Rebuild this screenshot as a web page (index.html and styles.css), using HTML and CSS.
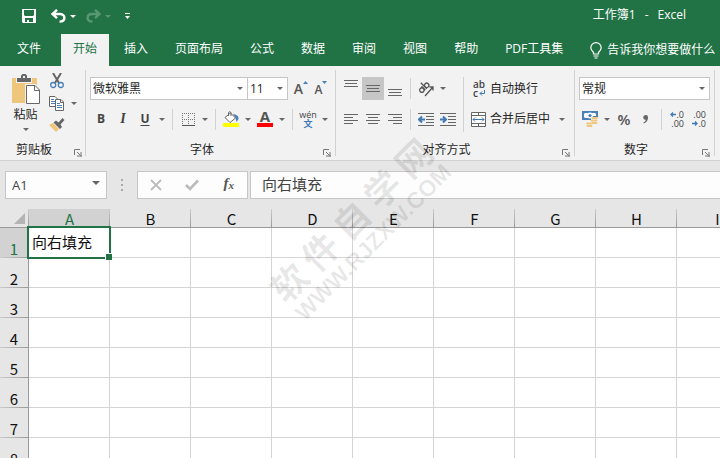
FILE: index.html
```html
<!DOCTYPE html>
<html lang="zh-CN">
<head>
<meta charset="utf-8">
<title>工作簿1 - Excel</title>
<link rel="stylesheet" href="styles.css">
</head>
<body>
<header class="titlebar">
  <div class="quick">
    <button class="q-save" aria-label="保存"><svg width="14" height="14" viewBox="0 0 14 14"><path fill="#fff" fill-rule="evenodd" d="M0 0H14V14H1L0 13ZM2 1V6L3 7H11L12 6V1ZM3 9V13H5V11H7V13H11V9Z"/></svg></button>
    <button class="q-undo" aria-label="撤消"><svg width="15" height="14" viewBox="0 0 15 14"><path fill="none" stroke="#fff" stroke-width="2.4" d="M6 .8L1.6 5 6 9.2M2 5H9C12.200 5 13.400 7 13.400 9 13.400 11.500 11.500 12.600 8.500 12.600"/></svg></button>
    <button class="q-drop" aria-label="撤消选项"><i class="tri white"></i></button>
    <button class="q-undo dim" aria-label="恢复"><svg width="15" height="14" viewBox="0 0 15 14"><path fill="none" stroke="#fff" stroke-width="2.400" d="M9 .8L13.400 5 9 9.200M13 5H6C2.800 5 1.600 7 1.600 9 1.600 11.500 3.500 12.600 6.500 12.600"/></svg></button>
    <button class="q-drop dim" aria-label="恢复选项"><i class="tri white"></i></button>
    <button class="q-more" aria-label="自定义快速访问工具栏"><svg width="5" height="6" viewBox="0 0 5 6"><path fill="#fff" d="M0 0H5V1H0ZM0 3H5L2.500 6Z"/></svg></button>
  </div>
  <div class="doc-name"><span>工作簿1</span><span>-</span><span>Excel</span></div>
</header>
<nav class="tabs">
  <a class="tab file" href="#">文件</a>
  <a class="tab active" href="#">开始</a>
  <a class="tab" href="#">插入</a>
  <a class="tab" href="#">页面布局</a>
  <a class="tab" href="#">公式</a>
  <a class="tab" href="#">数据</a>
  <a class="tab" href="#">审阅</a>
  <a class="tab" href="#">视图</a>
  <a class="tab" href="#">帮助</a>
  <a class="tab" href="#">PDF工具集</a>
  <a class="tell" href="#"><svg width="12" height="17" viewBox="0 0 12 17"><path fill="none" stroke="#fff" stroke-width="1.200" d="M3.500 12V10.500C2 9 .8 7.800 .8 5.800A5.200 5.200 0 0 1 11.200 5.800C11.200 7.800 10 9 8.500 10.500V12ZM3.500 14H8.500M4.500 16H7.500"/></svg>告诉我你想要做什么</a>
</nav>

<section class="ribbon">
  <div class="group clipboard">
    <div class="clip-body">
      <button class="paste"><svg width="29" height="31" viewBox="0 0 29 31"><path fill="#eec67c" d="M0 4H25V29H0Z"/><path fill="#f2f2f2" d="M4 3H20V9H4Z"/><path fill="#666" d="M5 4H9V1.500L10.500 0H13.500L15 1.500V4H19V8H5ZM11 2V4H13V2Z" fill-rule="evenodd"/><path fill="#fff" stroke="#f2f2f2" stroke-width="3" d="M14.500 11.500H23L27.500 16V29.500H14.500Z"/><path fill="#fff" stroke="#666" d="M14.500 11.500H23L27.500 16V29.500H14.500ZM22.500 11.500V16.500H27.500"/></svg><span>粘贴</span><i class="tri"></i></button>
      <div class="clip-tools">
        <button class="ic" aria-label="剪切"><svg width="14" height="16" viewBox="0 0 14 16"><path fill="none" stroke="#666" stroke-width="2" d="M3 0L9 10M11 0L5 10"/><circle cx="3.200" cy="12" r="2.500" fill="none" stroke="#4a80b5" stroke-width="1.300"/><circle cx="10.800" cy="12" r="2.500" fill="none" stroke="#4a80b5" stroke-width="1.300"/></svg></button>
        <div class="pair"><button class="ic" aria-label="复制"><svg width="16" height="15" viewBox="0 0 16 15"><path fill="#fff" stroke="#666" d="M.5 .5H6L8.500 3V10.500H.5Z"/><path stroke="#4a80b5" d="M2 3.500H5M2 5.500H6M2 7.500H6"/><path fill="#fff" stroke="#666" d="M6.500 3.500H12L14.500 6V14.500H6.500ZM11.500 3.500V6.500H14.500"/><path stroke="#4a80b5" d="M8 7.500H11M8 9.500H13M8 11.500H13"/></svg></button><button class="arrow" aria-label="复制选项"><i class="tri"></i></button></div>
        <button class="ic" aria-label="格式刷"><svg width="16" height="14" viewBox="0 0 16 14"><path fill="#eec67c" d="M0 7L4 5 10 11 7 14Z"/><path fill="#666" d="M4.500 4.500L7 2.500 9.500 4.500 13.500 0 15.500 2 11.500 6.500 13 9 11 11Z"/></svg></button>
      </div>
    </div>
    <div class="caption"><span>剪贴板</span><button class="launch" aria-label="剪贴板设置"><svg width="8" height="8" viewBox="0 0 8 8"><path fill="none" stroke="#777" d="M.5 6V.5H6M3 3L6.500 6.500M7 3V7.500M3 7H8"/></svg></button></div>
  </div>

  <div class="group font">
    <div class="row top">
      <label class="combo name"><select aria-label="字体"><option>微软雅黑</option></select></label><label class="combo size"><select aria-label="字号"><option>11</option></select></label>
      <button class="ic grow" aria-label="增大字号"><span>A</span><svg width="5" height="3" viewBox="0 0 5 3"><path fill="#4a80b5" d="M0 3L2.500 0 5 3Z"/></svg></button>
      <button class="ic grow small" aria-label="减小字号"><span>A</span><svg width="5" height="3" viewBox="0 0 5 3"><path fill="#4a80b5" d="M0 0H5L2.500 3Z"/></svg></button>
    </div>
    <div class="row">
      <button class="ic letter">B</button><button class="ic letter italic">I</button><button class="ic letter under">U</button><button class="arrow" aria-label="下划线选项"><i class="tri"></i></button>
      <i class="bar"></i>
      <button class="ic" aria-label="边框"><svg width="13" height="13" viewBox="0 0 13 13"><path stroke="#777" stroke-dasharray="1 1" fill="none" d="M0 .5H13M0 6.500H13M.5 0V12M6.500 0V12M12.500 0V12"/><path stroke="#555" d="M0 12.500H13"/></svg></button><button class="arrow" aria-label="边框选项"><i class="tri"></i></button>
      <i class="bar"></i>
      <button class="ic" aria-label="填充颜色"><svg width="16" height="16" viewBox="0 0 16 16"><path fill="#4a80b5" d="M10 3C14 3.500 16 5.500 15.500 8L13.500 11 12.500 7Z"/><path fill="#fff" stroke="#666" d="M2 6.500L7.500 2 12.500 7 7 11.500Z"/><path fill="none" stroke="#666" d="M5.500 5V1.500Q6.500 0 8 1.500V5"/><path fill="#ff0" d="M0 12H16V16H0Z"/></svg></button><button class="arrow" aria-label="填充颜色选项"><i class="tri"></i></button>
      <button class="ic fontcolor" aria-label="字体颜色"><span>A</span></button><button class="arrow" aria-label="字体颜色选项"><i class="tri"></i></button>
      <i class="bar"></i>
      <button class="ic pinyin"><span>wén</span><b>文</b></button><button class="arrow" aria-label="拼音选项"><i class="tri"></i></button>
    </div>
    <div class="caption"><span>字体</span><button class="launch" aria-label="字体设置"><svg width="8" height="8" viewBox="0 0 8 8"><path fill="none" stroke="#777" d="M.5 6V.5H6M3 3L6.500 6.500M7 3V7.500M3 7H8"/></svg></button></div>
  </div>

  <div class="group align">
    <div class="align-body">
      <div class="align-left">
        <div class="row top">
          <button class="ic" aria-label="顶端对齐"><svg width="14" height="17" viewBox="0 0 14 17"><path stroke="#666" d="M0 .5H14M1 3.500H13M0 6.500H14"/></svg></button><button class="ic on" aria-label="垂直居中"><svg width="14" height="7" viewBox="0 0 14 7"><path stroke="#666" d="M0 .5H14M1 3.500H13M0 6.500H14"/></svg></button><button class="ic" aria-label="底端对齐"><svg width="14" height="17" viewBox="0 0 14 17"><path stroke="#666" d="M0 9.500H14M1 12.500H13M0 15.500H14"/></svg></button>
          <i class="bar"></i>
          <button class="ic" aria-label="方向"><svg width="16" height="16" viewBox="0 0 16 16"><g fill="none" stroke="#555" stroke-width="1.300"><path d="M7 15L15 6M11.500 6H15V9.500"/><g transform="rotate(-45 6 7)"><circle cx="3" cy="7" r="2.200"/><path d="M5.500 4V9.500M7.500 1V9.500"/><circle cx="9.800" cy="7" r="2.200"/></g></g></svg></button><button class="arrow" aria-label="方向选项"><i class="tri"></i></button>
        </div>
        <div class="row">
          <button class="ic" aria-label="左对齐"><svg width="14" height="10" viewBox="0 0 14 10"><path stroke="#666" d="M0 .5H14M0 3.500H9M0 6.500H14M0 9.500H9"/></svg></button><button class="ic" aria-label="居中"><svg width="14" height="10" viewBox="0 0 14 10"><path stroke="#666" d="M0 .5H14M2 3.500H12M0 6.500H14M2 9.500H12"/></svg></button><button class="ic" aria-label="右对齐"><svg width="14" height="10" viewBox="0 0 14 10"><path stroke="#666" d="M0 .5H14M5 3.500H14M0 6.500H14M5 9.500H14"/></svg></button>
          <i class="bar"></i>
          <button class="ic" aria-label="减少缩进量"><svg width="16" height="13" viewBox="0 0 16 13"><path stroke="#666" d="M0 .5H16M8 3.500H16M8 6.500H16M8 9.500H16M0 12.500H16"/><path stroke="#3f7ab5" stroke-width="2" fill="none" d="M7 6.500H1M4 3.500L1 6.500 4 9.500"/></svg></button><button class="ic" aria-label="增加缩进量"><svg width="16" height="13" viewBox="0 0 16 13"><path stroke="#666" d="M0 .5H16M8 3.500H16M8 6.500H16M8 9.500H16M0 12.500H16"/><path stroke="#3f7ab5" stroke-width="2" fill="none" d="M0 6.500H6M3 3.500L6 6.500 3 9.500"/></svg></button>
        </div>
      </div>
      <i class="bar tall"></i>
      <div class="align-right">
        <button class="wide top"><span class="wrap-icon"><span>ab</span><span>c<svg width="6" height="6" viewBox="0 0 6 6"><path fill="none" stroke="#3f7ab5" d="M5.500 0V3.500H1M3 1.500L1 3.500 3 5.500"/></svg></span></span>自动换行</button>
        <div class="pair"><button class="wide"><svg width="16" height="15" viewBox="0 0 16 15"><path fill="#fff" stroke="#666" d="M.5 .5H14.500V14.500H.5ZM.5 3.500H14.500M.5 11.500H14.500M7.500 .5V3.500M7.500 11.500V14.500"/><path fill="none" stroke="#3f7ab5" d="M2 7.500H13M4 5.500L2 7.500 4 9.500M11 5.500L13 7.500 11 9.500"/></svg>合并后居中</button><button class="arrow" aria-label="合并选项"><i class="tri"></i></button></div>
      </div>
    </div>
    <div class="caption"><span>对齐方式</span><button class="launch" aria-label="对齐设置"><svg width="8" height="8" viewBox="0 0 8 8"><path fill="none" stroke="#777" d="M.5 6V.5H6M3 3L6.500 6.500M7 3V7.500M3 7H8"/></svg></button></div>
  </div>

  <div class="group number">
    <div class="row top"><label class="combo format"><select aria-label="数字格式"><option>常规</option></select></label></div>
    <div class="row">
      <button class="ic" aria-label="会计数字格式"><svg width="16" height="16" viewBox="0 0 16 16"><path fill="#4a80b5" d="M0 0H16V9H0Z"/><path fill="#fff" d="M2 3L3 2H6L5 4.500 6 7H3L2 6ZM10 2H13L14 3V5H11Z"/><circle cx="8" cy="4.500" r="3" fill="#fff"/><circle cx="8" cy="4.500" r="1.600" fill="#4a80b5"/><path fill="#f2f2f2" d="M9 6H16V14H10V16H4V11H9Z"/><path stroke="#eec67c" stroke-width="1.800" stroke-linecap="round" d="M10.500 7H15M9.500 9.500H14.500M10.500 12H14.500M5 12.500H9M5.500 15H9.500"/></svg></button><button class="arrow" aria-label="会计格式选项"><i class="tri"></i></button>
      <button class="ic percent">%</button><button class="ic comma" aria-label="千位分隔样式"><svg width="6" height="9" viewBox="0 0 6 9"><path fill="#666" d="M2.500 0A2.400 2.400 0 0 1 5 2.600C5 5.500 3.500 7.500 .8 8.500L.4 7.500C2 6.800 2.700 5.900 2.800 4.800A2.400 2.400 0 0 1 2.500 0Z"/></svg></button>
      <i class="bar"></i>
      <button class="ic decimal" aria-label="增加小数位数"><span><svg width="6" height="5" viewBox="0 0 6 5"><path fill="none" stroke="#3f7ab5" stroke-width="1.300" d="M6 2.500H1M3 .5L1 2.500 3 4.500"/></svg>.0</span><span>.00</span></button><button class="ic decimal" aria-label="减少小数位数"><span>.00</span><span><svg width="6" height="5" viewBox="0 0 6 5"><path fill="none" stroke="#3f7ab5" stroke-width="1.300" d="M0 2.500H5M3 .5L5 2.500 3 4.500"/></svg>.0</span></button>
    </div>
    <div class="caption"><span>数字</span><button class="launch" aria-label="数字设置"><svg width="8" height="8" viewBox="0 0 8 8"><path fill="none" stroke="#777" d="M.5 6V.5H6M3 3L6.500 6.500M7 3V7.500M3 7H8"/></svg></button></div>
  </div>
</section>

<section class="formula-bar">
  <label class="name-box"><input value="A1" aria-label="名称框"><i class="tri big"></i></label>
  <svg class="grip" width="2" height="12" viewBox="0 0 2 12"><path fill="#aaa" d="M0 0H2V2H0ZM0 5H2V7H0ZM0 10H2V12H0Z"/></svg>
  <div class="actions">
    <button aria-label="取消"><svg width="12" height="12" viewBox="0 0 12 12"><path stroke="#bbb" stroke-width="1.800" d="M1 1L11 11M11 1L1 11"/></svg></button>
    <button aria-label="输入"><svg width="14" height="12" viewBox="0 0 14 12"><path fill="none" stroke="#bbb" stroke-width="2.600" d="M1 6L5 10 13 1.500"/></svg></button>
    <button class="fx">f<sub>x</sub></button>
  </div>
  <input class="formula" value="向右填充" aria-label="编辑栏">
</section>

<main class="sheet">
  <table>
    <colgroup><col class="nums"><col span="9"></colgroup>
    <thead><tr><th class="corner"></th><th class="sel">A</th><th>B</th><th>C</th><th>D</th><th>E</th><th>F</th><th>G</th><th>H</th><th>I</th></tr></thead>
    <tbody>
      <tr><th class="sel">1</th><td class="current">向右填充</td><td></td><td></td><td></td><td></td><td></td><td></td><td></td><td></td></tr>
      <tr><th>2</th><td></td><td></td><td></td><td></td><td></td><td></td><td></td><td></td><td></td></tr>
      <tr><th>3</th><td></td><td></td><td></td><td></td><td></td><td></td><td></td><td></td><td></td></tr>
      <tr><th>4</th><td></td><td></td><td></td><td></td><td></td><td></td><td></td><td></td><td></td></tr>
      <tr><th>5</th><td></td><td></td><td></td><td></td><td></td><td></td><td></td><td></td><td></td></tr>
      <tr><th>6</th><td></td><td></td><td></td><td></td><td></td><td></td><td></td><td></td><td></td></tr>
      <tr><th>7</th><td></td><td></td><td></td><td></td><td></td><td></td><td></td><td></td><td></td></tr>
      <tr><th>8</th><td></td><td></td><td></td><td></td><td></td><td></td><td></td><td></td><td></td></tr>
    </tbody>
  </table>
</main>

<div class="watermark" aria-hidden="true">
  <div class="mark-name"><span>软</span><span>件</span><span>自</span><span>学</span><span>网</span></div>
  <div class="mark-url">WWW.RJZXW.COM</div>
</div>
</body>
</html>
```
FILE: styles.css
```css
* { box-sizing: border-box; }

body {
  margin: 0;
  height: 100vh;
  overflow: hidden;
  position: relative;
  display: flex;
  flex-direction: column;
  background: #fff;
  color: #262626;
  font: 12px/16px "Open Sans", "Noto Sans CJK SC", sans-serif;
}

button, input, select {
  margin: 0;
  padding: 0;
  border: 0;
  background: none;
  color: inherit;
  font: inherit;
}

svg { display: block; flex: none; }
a { color: inherit; text-decoration: none; }

.tri {
  display: block;
  border: 3px solid transparent;
  border-top-color: #666;
  border-bottom: 0;
}
.tri.white { border-top-color: #fff; }
.tri.big { border-width: 4px 4px 0; }

/* Title bar */
.titlebar {
  flex: none;
  height: 34px;
  display: flex;
  align-items: center;
  justify-content: space-between;
  padding: 0 34px 2px 22px;
  background: #217346;
  color: #fff;
}
.quick { display: flex; align-items: center; }
.quick button { display: flex; align-items: center; justify-content: center; height: 20px; }
.q-save { width: 14px; margin-right: 14px; }
.q-undo { width: 16px; }
.q-drop { width: 14px; margin-right: 5px; }
.q-more { width: 14px; }
.dim { opacity: .25; }
.doc-name { display: flex; gap: 9px; line-height: 30px; align-self: flex-start; }

/* Tabs */
.tabs {
  flex: none;
  height: 32px;
  display: flex;
  gap: 3px;
  padding-left: 5px;
  background: #217346;
  color: #fff;
  line-height: 30px;
  white-space: nowrap;
}
.tab { padding: 0 12px; }
.tab.file { margin-right: 5px; }
.tab.active { background: #f2f2f2; color: #217346; }
.tell { display: flex; align-items: center; gap: 5px; margin-left: 12px; }

/* Ribbon */
.ribbon {
  flex: none;
  display: flex;
  padding: 4px 0;
  background: #f2f2f2;
  border-bottom: 1px solid #d2d2d2;
  white-space: nowrap;
}
.group {
  display: flex;
  flex-direction: column;
  height: 86px;
  padding: 7px 4px 0;
  border-right: 1px solid #d2d2d2;
}
.row, .pair { display: flex; align-items: center; height: 24px; }
.row.top { height: 23px; margin-bottom: 7px; }
.ic, .arrow { display: flex; align-items: center; justify-content: center; height: 23px; }
.ic { width: 22px; }
.ic.on { background: #c6c6c6; }
.arrow { width: 12px; }
.bar { width: 1px; height: 21px; margin: 0 4px; background: #d2d2d2; }
.bar.tall { height: 55px; }

.caption {
  position: relative;
  margin: auto 0 -2px;
  text-align: center;
  line-height: 16px;
}
.caption span { margin-right: 17px; }
.launch { position: absolute; right: 0; bottom: 1px; }

.clipboard { padding: 0 4px 0 8px; }
.clip-body { display: flex; gap: 2px; }
.paste { display: flex; flex-direction: column; align-items: center; width: 36px; padding: 4px 0 0 1px; }
.paste span { margin: 1px 2px 4px 0; line-height: 18px; }
.paste .tri { margin-right: 2px; }
.clip-tools { display: flex; flex-direction: column; width: 35px; }
.clip-tools .ic, .clip-tools .pair { height: 22px; }
.clipboard .caption { margin-right: -1px; }
.clipboard .caption span { margin-right: 22px; }

.combo { position: relative; height: 23px; border: 1px solid #c6c6c6; background: #fff; }
.combo select { display: block; width: 100%; height: 21px; padding-left: 2px; appearance: none; outline: 0; }
.combo::after {
  content: "";
  position: absolute;
  right: 4px;
  top: 9px;
  border: 3px solid transparent;
  border-top-color: #666;
  border-bottom: 0;
}
.combo.name { width: 158px; }
.combo.size { width: 41px; margin: 0 3px 0 -1px; }
.combo.format { width: 131px; }

.grow { width: 20px; align-items: flex-start; color: #555; font-weight: 600; }
.grow span { font-size: 14px; line-height: 24px; }
.grow svg { margin-top: 4px; }
.grow.small span { font-size: 12px; line-height: 26px; }
.letter { color: #444; font-weight: 700; }
.italic { font-family: "Liberation Serif", serif; font-size: 14px; font-style: italic; }
.under { text-decoration: underline; text-underline-offset: 2px; }
.fontcolor span {
  width: 16px;
  height: 16px;
  border-bottom: 4px solid #f00;
  color: #555;
  font-size: 15px;
  font-weight: 700;
  line-height: 11px;
}
.pinyin { flex-direction: column; color: #444; font-size: 9px; line-height: 8px; }
.pinyin b { color: #3f7ab5; font-size: 9px; line-height: 9px; }

.align { padding-right: 6px; }
.align .caption { margin-right: -2px; }
.align-body { display: flex; }
.align-left .row { width: 119px; }
.wide { display: flex; align-items: center; gap: 3px; height: 24px; padding: 0 6px 0 3px; }
.wide.top { height: 23px; margin-bottom: 7px; }
.wrap-icon { width: 16px; padding-left: 2px; color: #444; font-size: 10px; font-weight: 600; line-height: 9px; }
.wrap-icon > span { display: flex; align-items: center; gap: 1px; justify-content: flex-start; }

.percent { color: #555; font-size: 15px; font-weight: 600; }
.decimal { flex-direction: column; align-items: flex-end; padding-right: 4px; color: #444; font-size: 9px; line-height: 9px; }
.decimal span { display: flex; align-items: center; gap: 1px; }

/* Formula bar */
.formula-bar {
  flex: none;
  display: flex;
  align-items: center;
  height: 48px;
  padding: 0 0 0 5px;
  background: #e6e6e6;
  color: #444;
}
.name-box, .actions, .formula { height: 28px; border: 1px solid #c6c6c6; background: #fdfdfd; }
.name-box { display: flex; align-items: center; width: 102px; padding: 0 6px; }
.name-box input { flex: 1; min-width: 0; font-size: 13px; }
.name-box .tri { margin-bottom: 4px; }
.grip { margin: 0 14px; }
.actions { display: flex; align-items: center; width: 111px; margin-right: 2px; }
.actions button { display: flex; flex: 1; justify-content: center; }
.fx { color: #555; font: italic 700 15px/20px "Liberation Serif", serif; }
.fx sub { font-size: 11px; line-height: 24px; }
.formula { flex: 1; min-width: 0; padding: 0 11px 4px; border-right: 0; font-size: 15px; }

/* Sheet */
.sheet { flex: 1; min-height: 0; overflow: hidden; }
table { width: 758px; table-layout: fixed; border-collapse: separate; border-spacing: 0; font-size: 15px; line-height: 18px; }
col { width: 81px; }
.nums { width: 29px; }
th, td { padding: 0; border: solid #d4d4d4; border-width: 0 1px 1px 0; }
th { background: #e6e6e6; color: #111; font-family: "Noto Sans CJK SC", sans-serif; font-weight: 400; vertical-align: bottom; }
thead th {
  height: 19px;
  line-height: 16px;
  border-bottom-color: #999;
  border-right: 0;
  background: linear-gradient(#ccc, #999) right / 1px 100% no-repeat #e6e6e6;
}
tbody th {
  height: 30px;
  padding-bottom: 1px;
  line-height: 17px;
  border-right-color: #999;
  border-bottom: 0;
  background: linear-gradient(90deg, #ccc, #999) bottom / 100% 1px no-repeat #e6e6e6;
}
th.sel { background-color: #d2d2d2; color: #217346; }
.corner { position: relative; }
.corner::after {
  content: "";
  position: absolute;
  right: 4px;
  bottom: 3px;
  border: solid transparent;
  border-width: 0 0 11px 11px;
  border-bottom-color: #b4b4b4;
}
.current { position: relative; padding: 0 0 2px 3px; color: #111; }
.current::before {
  content: "";
  position: absolute;
  inset: -2px;
  border: 2px solid #217346;
}
.current::after {
  content: "";
  position: absolute;
  right: -3px;
  bottom: -3px;
  width: 6px;
  height: 6px;
  border: solid #fff;
  border-width: 1px 0 0 1px;
  background: #217346;
}

/* Diagonal mark lying over the window */
.watermark {
  position: absolute;
  left: 239px;
  top: 198px;
  width: 240px;
  transform: rotate(-45deg);
  color: rgba(0, 0, 0, .09);
  font-weight: 700;
  text-align: center;
  pointer-events: none;
}
.mark-name { display: flex; justify-content: center; gap: 8px; font-size: 36px; line-height: 40px; }
.mark-url { font: 700 23px/20px "Liberation Sans", sans-serif; }
```
